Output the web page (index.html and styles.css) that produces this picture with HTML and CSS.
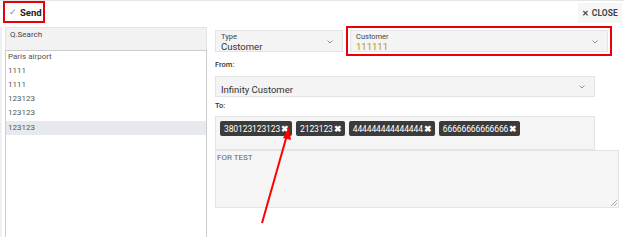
FILE: index.html
```html
<!DOCTYPE html>
<html>
<head>
<meta charset="utf-8">
<link rel="stylesheet" href="styles.css">
</head>
<body>
<div class="page">
  <header class="topbar">
    <button class="send"><span class="check">✓</span>Send</button>
    <button class="close"><span class="x">✕</span>CLOSE</button>
  </header>
  <div class="main">
    <aside class="left">
      <div class="search">Q.Search</div>
      <ul class="list">
        <li>Paris airport</li>
        <li>1111</li>
        <li>1111</li>
        <li>123123</li>
        <li>123123</li>
        <li class="sel">123123</li>
      </ul>
    </aside>
    <section class="right">
      <div class="row1">
        <div class="select type">
          <div class="lbl">Type</div>
          <div class="val">Customer</div>
          <svg class="chev" width="6" height="4" viewBox="0 0 6 4"><polyline points="0.5,0.5 3,3 5.5,0.5" fill="none" stroke="#888" stroke-width="0.9"/></svg>
        </div>
        <div class="select cust">
          <div class="lbl">Customer</div>
          <div class="val gold">111111</div>
          <svg class="chev" width="6" height="4" viewBox="0 0 6 4"><polyline points="0.5,0.5 3,3 5.5,0.5" fill="none" stroke="#888" stroke-width="0.9"/></svg>
        </div>
      </div>
      <div class="label from">From:</div>
      <div class="select wide">
        <div class="val">Infinity Customer</div>
        <svg class="chev" width="6" height="4" viewBox="0 0 6 4"><polyline points="0.5,0.5 3,3 5.5,0.5" fill="none" stroke="#888" stroke-width="0.9"/></svg>
      </div>
      <div class="label to">To:</div>
      <div class="tags">
        <span class="tag">380123123123<b>✖</b></span>
        <span class="tag">2123123<b>✖</b></span>
        <span class="tag">444444444444444<b>✖</b></span>
        <span class="tag">66666666666666<b>✖</b></span>
      </div>
      <div class="textarea">FOR TEST
        <svg class="grip" width="7" height="7" viewBox="0 0 7 7"><line x1="1" y1="7" x2="7" y2="1" stroke="#999" stroke-width="0.8"/><line x1="4" y1="7" x2="7" y2="4" stroke="#999" stroke-width="0.8"/></svg>
      </div>
    </section>
  </div>
  <svg class="arrow" width="624" height="237" viewBox="0 0 624 237">
    <line x1="262" y1="222" x2="287" y2="134" stroke="#f00" stroke-width="2"/>
    <polygon points="289,126 283,137 291,139" fill="#f00"/>
  </svg>
</div>
</body>
</html>
```
FILE: styles.css
```css
* { box-sizing: border-box; }
html, body { margin: 0; padding: 0; background: #fff; }
body { font-family: Roboto, "Liberation Sans", sans-serif; color: #333; }
.page {
  position: relative;
  width: 624px;
  height: 237px;
  overflow: hidden;
  border-top: 1px solid #e4e6e8;
}
.topbar {
  display: flex;
  justify-content: space-between;
  align-items: flex-start;
  height: 26px;
  padding: 0 2px 0 3px;
}
.send {
  display: flex;
  align-items: center;
  height: 22px;
  width: 42px;
  padding: 0 0 0 4px;
  border: 2px solid #e8000b;
  background: #fff;
  font-family: Roboto, "Liberation Sans", sans-serif;
  font-weight: 700;
  font-size: 9.5px;
  color: #222;
  white-space: nowrap;
}
.send .check { color: #888; font-weight: 400; font-size: 9px; margin-right: 3px; }
.close {
  margin-top: 2px;
  height: 20px;
  padding: 0 4px;
  border: none;
  background: #f6f6f6;
  font-family: "Roboto", "Liberation Sans", sans-serif;
  font-weight: 700;
  font-size: 8.5px;
  color: #444;
  letter-spacing: 0.1px;
}
.close .x { margin-right: 3px; font-size: 8px; }
.main {
  display: flex;
  padding-left: 5px;
  border-left: 2px solid #eef0f2;
  height: 211px;
}
.left {
  width: 202px;
  display: flex;
  flex-direction: column;
  margin-left: -2px;
}
.search {
  height: 23px;
  background: #f2f2f2;
  border: 1px solid #e3e3e3;
  border-bottom: none;
  padding: 2px 4px;
  font-size: 8px;
  color: #444;
}
.list {
  flex: 1;
  margin: 0;
  padding: 0;
  list-style: none;
  border: 1px solid #c9cdd1;
  border-bottom: none;
}
.list li {
  height: 14px;
  line-height: 12px;
  padding: 0 2px;
  font-size: 8px;
  color: #555;
}
.list li.sel { background: #e7e9ec; line-height: 13px; }
.right {
  margin-left: 8px;
  width: 404px;
  display: flex;
  flex-direction: column;
}
.row1 {
  display: flex;
  gap: 7px;
  margin-top: 3px;
}
.select {
  position: relative;
  height: 22px;
  background: #f4f4f4;
  border: 1px solid #e4e4e4;
  padding: 1px 5px;
}
.select .lbl { font-size: 7.5px; color: #444; line-height: 9px; }
.select .val { font-size: 9.5px; color: #333; line-height: 11px; }
.select .val.gold { color: #b09a1c; }
.select .chev { position: absolute; right: 9px; top: 9px; }
.type { width: 128px; }
.cust {
  width: 258px;
  outline: 2px solid #e8000b;
  outline-offset: 2px;
}
.label { font-size: 7.5px; font-weight: 500; color: #333; }
.from { margin-top: 8px; height: 16px; }
.wide { width: 380px; height: 21px; padding-top: 7px; }
.wide .chev { top: 8px; }
.to { margin-top: 4px; height: 15px; }
.tags {
  width: 380px;
  height: 34px;
  background: #f5f5f5;
  border: 1px solid #e4e4e4;
  padding: 4px 4px;
  display: flex;
  gap: 4px;
  align-items: flex-start;
}
.tag {
  display: inline-flex;
  align-items: center;
  height: 15px;
  padding: 0 3px 0 4px;
  background: #3b3b3b;
  color: #fff;
  border-radius: 2px;
  font-size: 8.5px;
  letter-spacing: -0.1px;
}
.tag b { font-size: 9px; margin-left: 1px; }
.textarea {
  position: relative;
  width: 404px;
  height: 58px;
  background: #f5f5f5;
  border: 1px solid #e4e4e4;
  padding: 2px 1px;
  font-size: 8px;
  color: #666;
}
.grip { position: absolute; right: 1px; bottom: 1px; }
.arrow { position: absolute; left: 0; top: 0; pointer-events: none; }
```
